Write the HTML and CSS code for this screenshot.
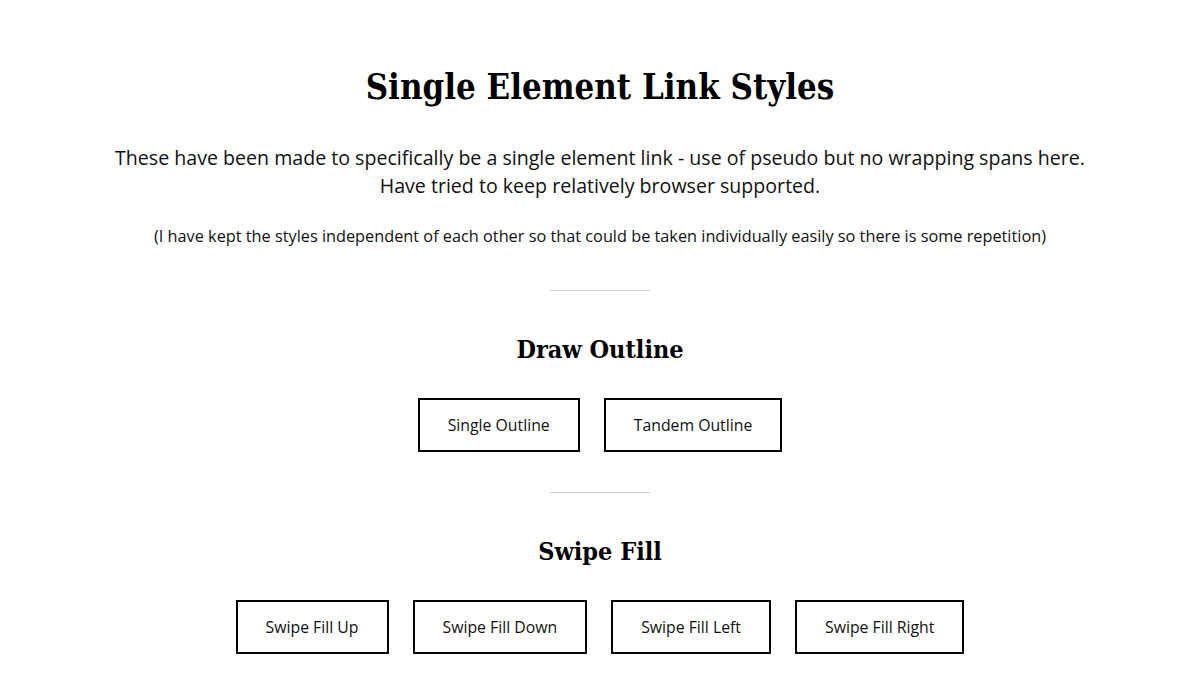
FILE: index.html
```html
<!DOCTYPE html>
<html lang="en">
<head>
<meta charset="utf-8">
<title>Single Element Link Styles</title>
<link rel="stylesheet" href="styles.css">
</head>
<body>
<main class="page">
  <h1 class="title">Single Element Link Styles</h1>
  <p class="intro">These have been made to specifically be a single element link - use of pseudo but no wrapping spans here.<br>Have tried to keep relatively browser supported.</p>
  <p class="note">(I have kept the styles independent of each other so that could be taken individually easily so there is some repetition)</p>

  <section class="group">
    <hr class="rule">
    <h2 class="group-title">Draw Outline</h2>
    <div class="links">
      <a class="btn" href="#">Single Outline</a>
      <a class="btn" href="#">Tandem Outline</a>
    </div>
  </section>

  <section class="group">
    <hr class="rule">
    <h2 class="group-title">Swipe Fill</h2>
    <div class="links">
      <a class="btn" href="#">Swipe Fill Up</a>
      <a class="btn" href="#">Swipe Fill Down</a>
      <a class="btn" href="#">Swipe Fill Left</a>
      <a class="btn" href="#">Swipe Fill Right</a>
    </div>
  </section>
</main>
</body>
</html>
```

FILE: styles.css
```css
html, body {
  margin: 0;
  padding: 0;
  background: #fff;
}

body {
  font-family: "Open Sans", "DejaVu Sans", sans-serif;
  color: #111;
}

.page {
  display: flex;
  flex-direction: column;
  align-items: center;
  text-align: center;
  padding-top: 63px;
}

.title {
  margin: 0;
  font-family: "DejaVu Serif Condensed", "DejaVu Serif", serif;
  font-stretch: condensed;
  font-weight: 700;
  font-size: 34.5px;
  line-height: 48px;
  color: #000;
}

.intro {
  margin: 33px 0 0;
  font-size: 19.6px;
  line-height: 28px;
  color: #111;
}

.note {
  margin: 24px 0 0;
  font-size: 16.3px;
  line-height: 24px;
  color: #111;
}

.group {
  display: flex;
  flex-direction: column;
  align-items: center;
}

.rule {
  width: 100px;
  height: 0;
  border: 0;
  border-top: 1px solid #cfcfcf;
  margin: 42px 0 0;
}

.group + .group .rule {
  margin-top: 40px;
}

.group-title {
  margin: 41px 0 0;
  font-family: "DejaVu Serif Condensed", "DejaVu Serif", serif;
  font-stretch: condensed;
  font-weight: 700;
  font-size: 25px;
  line-height: 36px;
  color: #000;
}

.links {
  display: flex;
  gap: 24px;
  margin-top: 30px;
}

.btn {
  display: block;
  border: 2px solid #000;
  padding: 0 28px;
  height: 50px;
  line-height: 50px;
  font-size: 15.8px;
  color: #111;
  text-decoration: none;
}
```
